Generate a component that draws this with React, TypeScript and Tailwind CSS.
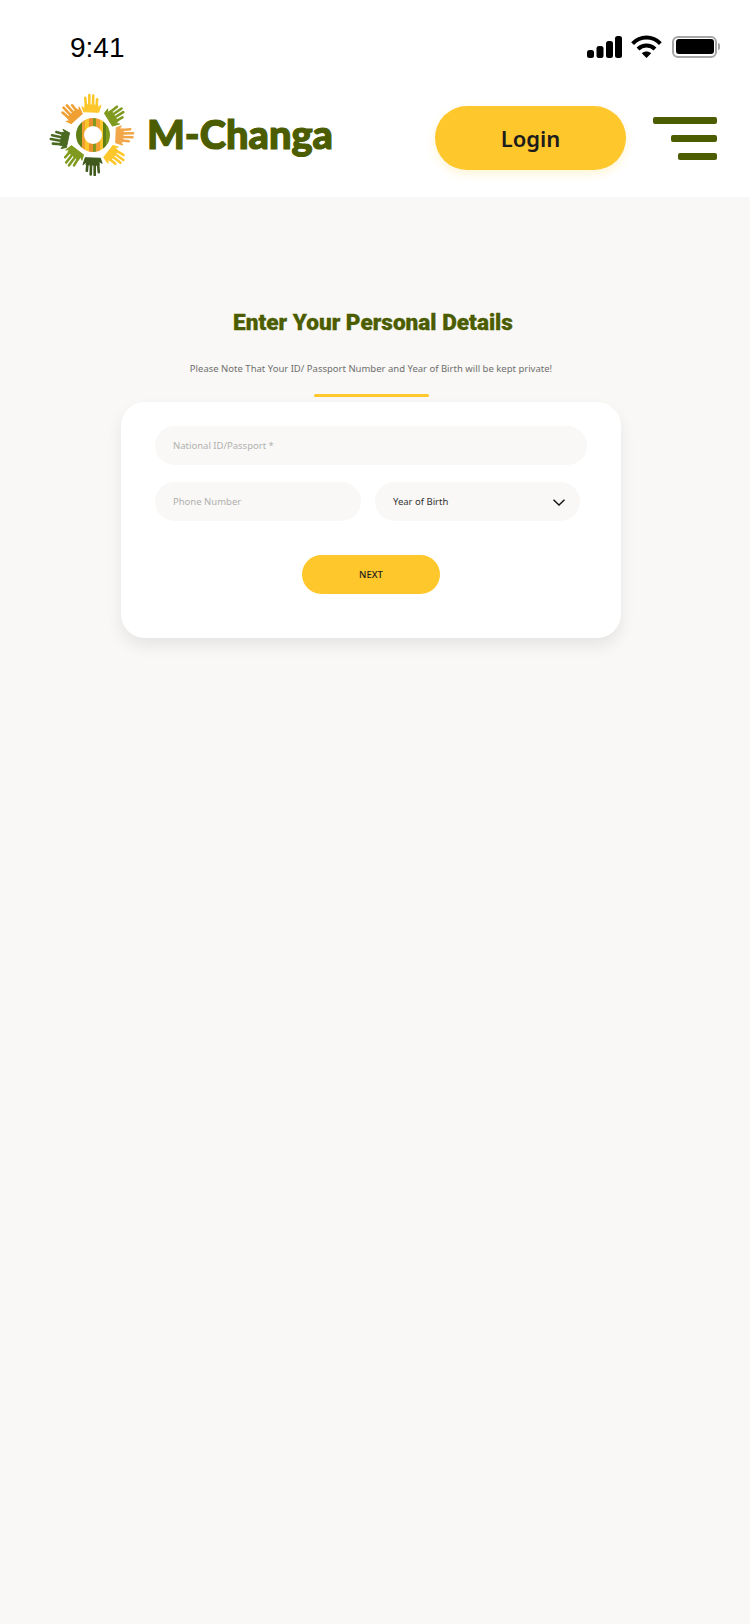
const sans = '"Noto Sans", "Lato", sans-serif';

const hands = [
  { x: 43, y: 12, rot: 2, color: '#fdc72c' },
  { x: 23, y: 21, rot: -42, color: '#f0a033' },
  { x: 67, y: 23, rot: 58, color: '#7f9a1e' },
  { x: 76, y: 43, rot: 92, color: '#f2a64a' },
  { x: 67, y: 64, rot: 128, color: '#fdc72c' },
  { x: 45, y: 74, rot: 182, color: '#3f5a1c' },
  { x: 25, y: 65, rot: 218, color: '#7f9a1e' },
  { x: 12, y: 47, rot: 282, color: '#4a6a22' },
];

function Hand({ x, y, rot, color }: { x: number; y: number; rot: number; color: string }) {
  return (
    <g transform={`translate(${x} ${y}) rotate(${rot})`} stroke={color} strokeLinecap="round" fill="none">
      <path d="M-9 3 L-7 8 L8 8 L10 1 L7 4 L7 1 L-6 1 L-6 5 Z" fill={color} strokeWidth="1" strokeLinejoin="round" />
      <path d="M-5 2 L-6 -6" strokeWidth="2.6" />
      <path d="M-1.6 2 L-2 -9" strokeWidth="2.6" />
      <path d="M2 2 L2 -8.5" strokeWidth="2.6" />
      <path d="M5.6 2 L6 -5" strokeWidth="2.6" />
    </g>
  );
}

function LogoMark() {
  const stripes = [
    { x: 28, w: 6, c: '#5f7f14' },
    { x: 34, w: 3, c: '#f0a033' },
    { x: 37, w: 4, c: '#fdc72c' },
    { x: 41, w: 4, c: '#e98f2c' },
    { x: 45, w: 3, c: '#7f9a1e' },
    { x: 48, w: 4, c: '#f0a033' },
    { x: 52, w: 3, c: '#fdc72c' },
    { x: 55, w: 3, c: '#5f7f14' },
    { x: 58, w: 5, c: '#7f9a1e' },
  ];
  return (
    <svg width="92" height="84" viewBox="0 0 92 84" className="shrink-0">
      <defs>
        <mask id="ring">
          <circle cx="45" cy="43" r="13" fill="none" stroke="white" strokeWidth="8" />
        </mask>
      </defs>
      <g mask="url(#ring)">
        {stripes.map((s) => (
          <rect key={s.x} x={s.x} y="25" width={s.w} height="36" fill={s.c} />
        ))}
      </g>
      {hands.map((h) => (
        <Hand key={h.rot} {...h} />
      ))}
    </svg>
  );
}

function SignalIcon() {
  return (
    <svg width="35" height="22" viewBox="0 0 35 22" fill="black">
      <rect x="0" y="14" width="7" height="8" rx="2.5" />
      <rect x="9.5" y="10" width="7" height="12" rx="2.5" />
      <rect x="19" y="5" width="7" height="17" rx="2.5" />
      <rect x="28" y="0" width="7" height="22" rx="2.5" />
    </svg>
  );
}

function WifiIcon() {
  return (
    <svg width="31" height="23" viewBox="0 0 31 23" fill="none" stroke="black" strokeWidth="4">
      <path d="M1.6 8.6 C9.4 0.6 21.6 0.6 29.4 8.6" />
      <path d="M7 14 C11.8 9.4 19.2 9.4 24 14" />
      <path d="M15.5 23 L10.8 18.2 C13.4 15.8 17.6 15.8 20.2 18.2 Z" fill="black" stroke="none" />
    </svg>
  );
}

function BatteryIcon() {
  return (
    <div className="ml-px flex items-center">
      <div className="flex h-[22px] w-[45px] items-center justify-center rounded-[6px] border-2 border-[#a6a6a6]">
        <div className="h-[15px] w-[38px] rounded-[3px] bg-black" />
      </div>
      <div className="ml-px h-[7px] w-[2px] rounded-r-full bg-[#a6a6a6]" />
    </div>
  );
}

function FieldPill({ label, className }: { label: string; className: string }) {
  return (
    <div className={`flex h-[39px] items-center rounded-full bg-[#f9f8f6] pl-[18px] pt-px text-[9.5px] text-[#b0b0ae] ${className}`}>
      {label}
    </div>
  );
}

export default function App() {
  return (
    <div className="flex min-h-screen flex-col bg-[#f9f8f6]" style={{ fontFamily: sans }}>
      <header className="h-[197px] bg-white">
        <div className="flex h-[92px] items-start justify-between pl-[70px] pr-[30px] pt-[34px]">
          <span className="text-[28px] leading-[28px] text-black" style={{ fontFamily: '"Liberation Sans", sans-serif' }}>
            9:41
          </span>
          <div className="mt-px flex items-center gap-[9px]">
            <SignalIcon />
            <WifiIcon />
            <BatteryIcon />
          </div>
        </div>
        <div className="flex items-start pl-[48px]">
          <LogoMark />
          <span
            className="ml-[7px] mt-[20px] w-[190px] whitespace-nowrap text-[39.8px] font-black leading-[44px] text-[#4b5d00] [-webkit-text-stroke:1.2px_#4b5d00]"
            style={{ fontFamily: 'Lato, sans-serif' }}
          >
            M-Changa
          </span>
          <button className="ml-[98px] mt-[14px] h-[64px] w-[191px] rounded-full bg-[#fec72c] text-[22px] font-semibold text-[#1c1c1c] shadow-[0_4px_10px_rgba(254,199,44,0.2)]">
            Login
          </button>
          <div className="ml-[27px] mt-[25px] flex w-[64px] flex-col items-end gap-[11px]">
            <div className="h-[7px] w-[64px] rounded-[2px] bg-[#4b5d00]" />
            <div className="h-[7px] w-[46px] rounded-[2px] bg-[#4b5d00]" />
            <div className="h-[7px] w-[39px] rounded-[2px] bg-[#4b5d00]" />
          </div>
        </div>
      </header>

      <main className="flex flex-col items-center pr-[8px] pt-[111px]">
        <h1
          className="ml-[4px] text-[22.6px] font-black leading-[30px] text-[#4b5d00] [-webkit-text-stroke:0.3px_#4b5d00]"
          style={{ fontFamily: 'Roboto, sans-serif' }}
        >
          Enter Your Personal Details
        </h1>
        <p className="mt-[23px] text-[9.5px] leading-[16px] text-[#6f6f6f]">
          Please Note That Your ID/ Passport Number and Year of Birth will be kept private!
        </p>
        <div className="mt-[17px] h-[3px] w-[115px] rounded-full bg-[#fec72c]" />
        <section className="mt-[5px] h-[236px] w-[500px] rounded-[24px] bg-white pl-[34px] pr-[34px] pt-[24px] shadow-[0_8px_16px_rgba(0,0,0,0.08)]">
          <FieldPill label="National ID/Passport *" className="w-[432px]" />
          <div className="mt-[17px] flex gap-[14px]">
            <FieldPill label="Phone Number" className="w-[206px]" />
            <div className="flex h-[39px] w-[205px] items-center justify-between rounded-full bg-[#f9f8f6] pl-[18px] pr-[15px] pt-px text-[9.5px] text-[#333333]">
              Year of Birth
              <svg width="12" height="7" viewBox="0 0 12 7" fill="none" stroke="#111111" strokeWidth="1.4">
                <path d="M0.5 0.7 L6 6 L11.5 0.7" />
              </svg>
            </div>
          </div>
          <button className="mx-auto mt-[34px] block h-[39px] w-[138px] rounded-full bg-[#fec72c] pt-px text-[9.5px] font-medium text-[#1c1c1c]">
            NEXT
          </button>
        </section>
      </main>
    </div>
  );
}
